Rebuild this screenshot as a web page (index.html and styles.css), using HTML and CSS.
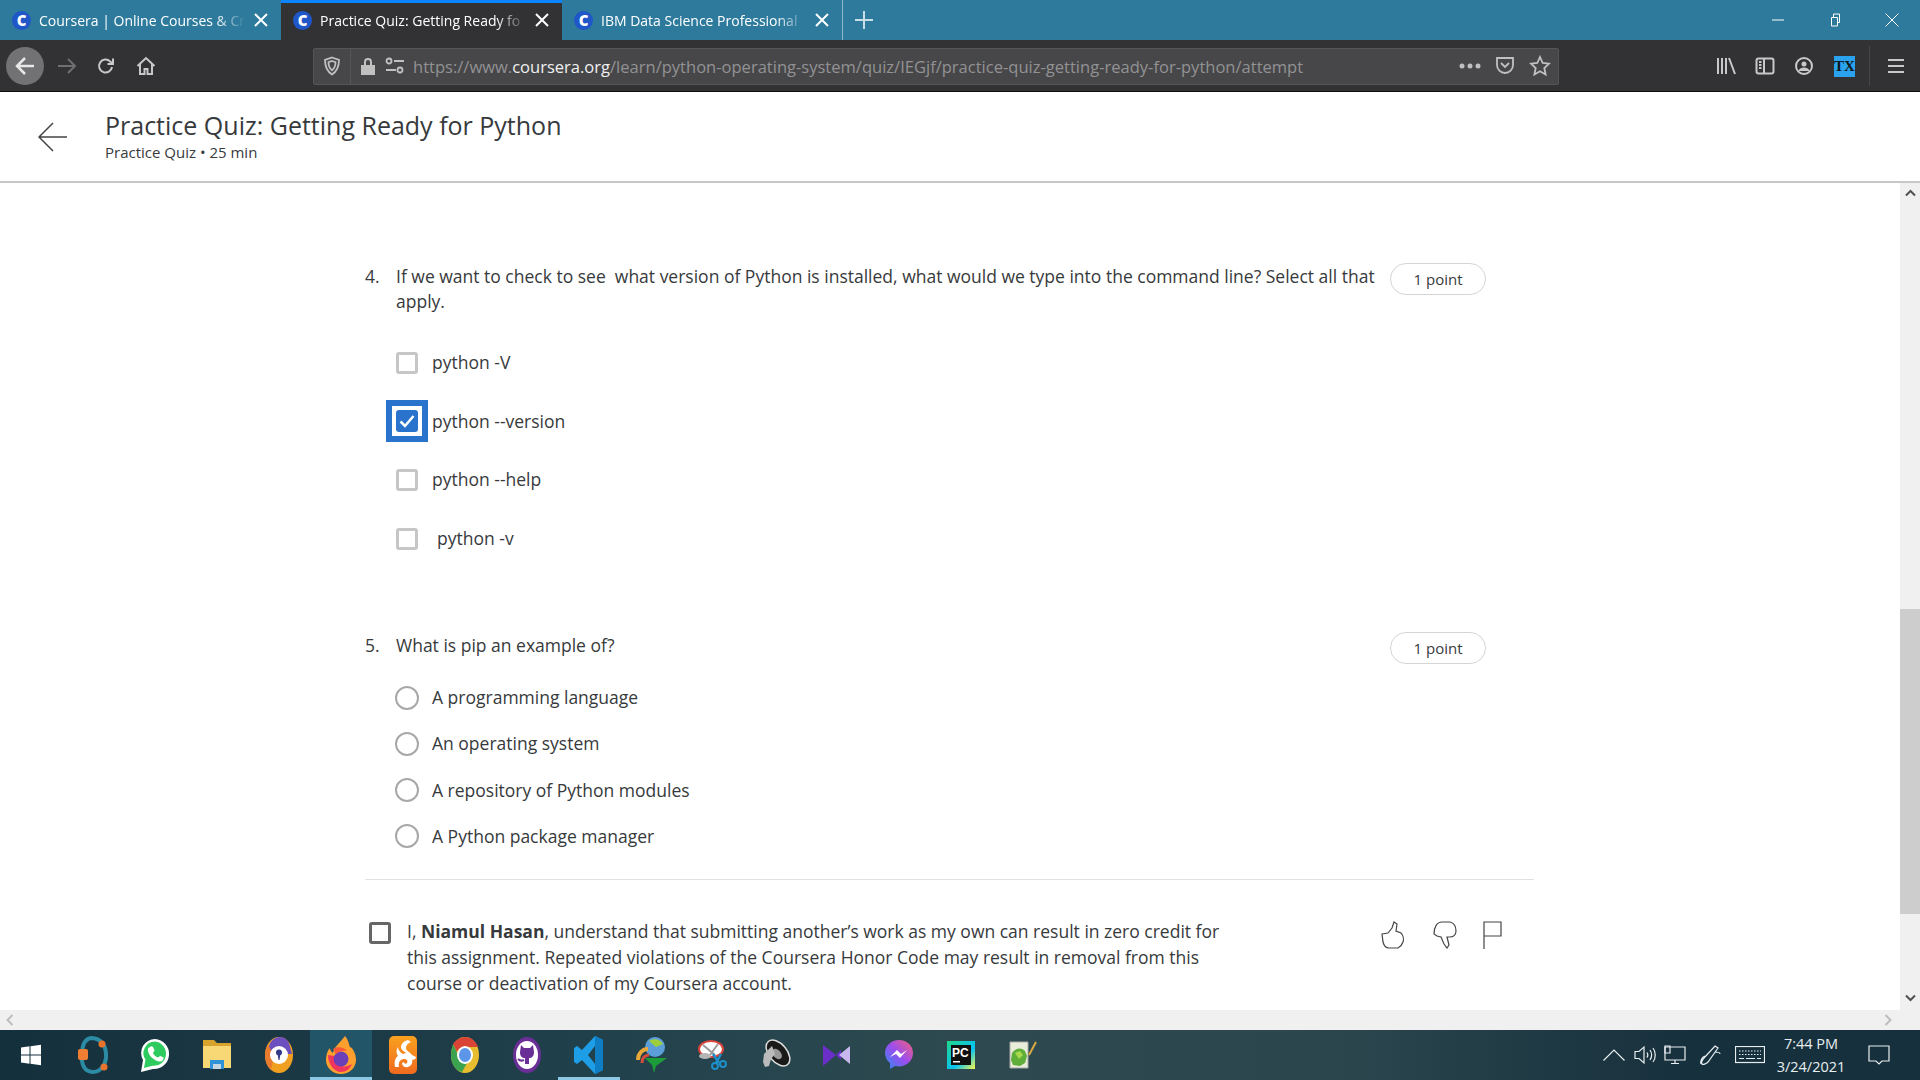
FILE: index.html
```html
<!DOCTYPE html>
<html lang="en">
<head>
    <meta charset="UTF-8">
    <meta name="viewport" content="width=device-width, initial-scale=1.0">
    <title>Practice Quiz: Getting Ready for Python</title>
    <link rel="stylesheet" href="styles.css">
</head>
<body>

    <div class="tab-bar">
        <div class="tab">
            <span class="favicon">C</span>
            <span class="tab-title">Coursera | Online Courses &amp; Cr</span>
            <svg class="tab-close" width="14" height="14" viewBox="0 0 14 14"><path d="M1 1l12 12M13 1L1 13"/></svg>
        </div>
        <div class="tab active">
            <span class="favicon">C</span>
            <span class="tab-title">Practice Quiz: Getting Ready fo</span>
            <svg class="tab-close" width="14" height="14" viewBox="0 0 14 14"><path d="M1 1l12 12M13 1L1 13"/></svg>
        </div>
        <div class="tab last">
            <span class="favicon">C</span>
            <span class="tab-title">IBM Data Science Professional</span>
            <svg class="tab-close" width="14" height="14" viewBox="0 0 14 14"><path d="M1 1l12 12M13 1L1 13"/></svg>
        </div>
        <svg class="new-tab" width="18" height="18" viewBox="0 0 18 18"><path d="M9 0v18M0 9h18"/></svg>
        <div class="window-controls">
            <svg width="14" height="14" viewBox="0 0 14 14"><path d="M1 7h12"/></svg>
            <svg width="14" height="14" viewBox="0 0 14 14"><path d="M3.500 4.500h6v8.500h-6zM5.500 4.500V1h6v8.500h-2"/></svg>
            <svg width="14" height="14" viewBox="0 0 14 14"><path d="M.5.5l13 13M13.500.5l-13 13"/></svg>
        </div>
    </div>

    <div class="toolbar">
        <div class="back-circle">
            <svg width="22" height="22" viewBox="0 0 22 22"><path d="M20 11H3M11 3l-8 8 8 8"/></svg>
        </div>
        <svg class="nav-icon forward" width="20" height="20" viewBox="0 0 20 20"><path d="M1 10h17M11 3l7 7-7 7"/></svg>
        <svg class="nav-icon" width="20" height="20" viewBox="0 0 20 20"><path d="M16 11a6.500 6.500 0 1 1-1.900-5.600L17 8M17 2.500V8h-5.500"/></svg>
        <svg class="nav-icon home" width="20" height="20" viewBox="0 0 20 20"><path d="M1.500 10L10 2l8.500 8M4 8v10h4.500v-5h3v5H16V8"/></svg>

        <div class="url-bar">
            <svg class="url-icon" width="18" height="20" viewBox="0 0 18 20"><path d="M9 1.500l7 2.500c0 6-1.500 11-7 14.500C3.500 15 2 10 2 4z"/><path d="M9 5l3.500 1.200c0 3-.7 5.800-3.500 8-2.800-2.200-3.500-5-3.500-8z"/></svg>
            <span class="url-sep"></span>
            <svg class="url-lock" width="16" height="20" viewBox="0 0 16 20"><path d="M1 9h14v10H1zM4 9V6a4 4 0 0 1 8 0v3h-2V6a2 2 0 0 0-4 0v3z"/></svg>
            <svg class="url-icon url-perm" width="20" height="18" viewBox="0 0 20 18"><circle cx="4" cy="4" r="2.500"/><path d="M9 4h10M1 13h10"/><circle cx="15" cy="13" r="2.500"/></svg>
            <span class="url-text">https://www.<b>coursera.org</b>/learn/python-operating-system/quiz/IEGjf/practice-quiz-getting-ready-for-python/attempt</span>
            <svg class="url-dots" width="22" height="6" viewBox="0 0 22 6"><circle cx="3" cy="3" r="2.500"/><circle cx="11" cy="3" r="2.500"/><circle cx="19" cy="3" r="2.500"/></svg>
            <svg class="url-icon" width="20" height="20" viewBox="0 0 20 20"><path d="M2 2h16v7a8 8 0 0 1-16 0z"/><path d="M6 7l4 4 4-4"/></svg>
            <svg class="url-icon" width="22" height="22" viewBox="0 0 22 22"><path d="M11 2l2.700 6 6.300.7-4.700 4.300 1.300 6.500L11 16.200 5.400 19.500 6.700 13 2 8.700 8.300 8z"/></svg>
        </div>

        <div class="tool-icons">
            <svg class="nav-icon" width="20" height="20" viewBox="0 0 20 20"><path d="M2 2v16M6 2v16M10 2v16M13 2l6 16"/></svg>
            <svg class="nav-icon" width="20" height="20" viewBox="0 0 20 20"><rect x="1.500" y="2.500" width="17" height="15" rx="2"/><path d="M9 2.500v15M4 6h2.500M4 9h2.500M4 12h2.500"/></svg>
            <svg class="nav-icon" width="20" height="20" viewBox="0 0 20 20"><circle cx="10" cy="10" r="8"/><circle class="solid" cx="10" cy="8" r="2.500"/><path class="solid" d="M4.500 15c1-3 3-3.500 5.500-3.500s4.500.5 5.500 3.500z"/></svg>
            <span class="tx-badge">TX</span>
            <span class="tool-sep"></span>
            <svg class="nav-icon menu" width="18" height="16" viewBox="0 0 18 16"><path d="M1 2h16M1 8h16M1 14h16"/></svg>
        </div>
    </div>

    <div class="page-header">
        <svg class="page-back" width="30" height="30" viewBox="0 0 30 30"><path d="M29 15H1M15 1L1 15l14 14"/></svg>
        <div class="page-title">
            <h1>Practice Quiz: Getting Ready for Python</h1>
            <p class="page-sub">Practice Quiz • 25 min</p>
        </div>
    </div>

    <div class="viewport">
        <div class="page-col">
            <div class="scroll-area">
                <div class="quiz">

                    <div class="question">
                        <span class="q-num">4.</span>
                        <p class="q-text">If we want to check to see&nbsp; what version of Python is installed, what would we type into the command line? Select all that apply.</p>
                        <span class="points">1 point</span>
                    </div>
                    <div class="check-list">
                        <div class="option"><span class="box"></span><span>python -V</span></div>
                        <div class="option">
                            <span class="box checked">
                                <svg width="16" height="14" viewBox="0 0 16 14"><path d="M1.500 7.500l4.500 4.500 8.500-10"/></svg>
                            </span>
                            <span>python --version</span>
                        </div>
                        <div class="option"><span class="box"></span><span>python --help</span></div>
                        <div class="option"><span class="box"></span><span class="shifted">python -v</span></div>
                    </div>

                    <div class="question q5">
                        <span class="q-num">5.</span>
                        <p class="q-text">What is pip an example of?</p>
                        <span class="points">1 point</span>
                    </div>
                    <div class="radio-list">
                        <div class="option"><span class="radio"></span><span>A programming language</span></div>
                        <div class="option"><span class="radio"></span><span>An operating system</span></div>
                        <div class="option"><span class="radio"></span><span>A repository of Python modules</span></div>
                        <div class="option"><span class="radio"></span><span>A Python package manager</span></div>
                    </div>

                    <div class="honor">
                        <span class="box dark"></span>
                        <p class="honor-text">I, <b>Niamul Hasan</b>, understand that submitting another’s work as my own can result in zero credit for this assignment. Repeated violations of the Coursera Honor Code may result in removal from this course or deactivation of my Coursera account.</p>
                        <div class="feedback">
                            <svg width="24" height="28" viewBox="0 0 24 28"><path d="M1 13l6-1 4-5 2-6 3 2-1 7 5 2c2 2 3 6 2 9-1 3-3 5-5 6H8c-3 0-5-2-6-6z"/></svg>
                            <svg width="24" height="28" viewBox="0 0 24 28"><path d="M1 13C1 6 4 1 9 1h8c4 1 6 5 6 9 0 4-3 6-6 6h-3l2 8-2 3-3-4-3-7-4-1z"/></svg>
                            <svg width="19" height="28" viewBox="0 0 19 28"><path d="M1 28V1h17v14H1"/></svg>
                        </div>
                    </div>

                </div>
            </div>
            <div class="h-scroll">
                <svg width="8" height="12" viewBox="0 0 8 12"><path d="M6.500 1L1.500 6l5 5"/></svg>
                <svg width="8" height="12" viewBox="0 0 8 12"><path d="M1.500 1l5 5-5 5"/></svg>
            </div>
        </div>

        <div class="v-scroll">
            <svg width="11" height="8" viewBox="0 0 11 8"><path d="M1 6.500l4.500-4.500 4.500 4.500"/></svg>
            <div class="v-track"><div class="v-thumb"></div></div>
            <svg width="11" height="8" viewBox="0 0 11 8"><path d="M1 1.500l4.500 4.500 4.500-4.500"/></svg>
        </div>
    </div>

    <div class="taskbar">
        <div class="task-item">
            <svg width="22" height="22" viewBox="0 0 22 22"><path fill="#fff" d="M1 3.500l8.500-1.200v8.200H1zM10.500 2.200L21 .8v9.700H10.500zM1 11.500h8.500v8.200L1 18.500zM10.500 11.500H21v9.700l-10.500-1.400z"/></svg>
        </div>
        <div class="task-item">
            <svg width="32" height="40" viewBox="0 0 32 40"><path fill="none" stroke="#2b8ca3" stroke-width="4" d="M14 3c10 0 16 8 15 20-1 8-6 14-13 14C8 37 4 30 5 20 5 10 8 4 14 3z"/><rect x="1" y="14" width="10" height="11" rx="2" fill="#ef7d32"/><circle cx="25" cy="9" r="3.500" fill="#e8732a"/><circle cx="27" cy="32" r="3.500" fill="#e8732a"/></svg>
        </div>
        <div class="task-item">
            <svg width="30" height="36" viewBox="0 0 30 36"><path fill="#fff" d="M15 2a14 14 0 0 0-12 21L1 35l12-3A14 14 0 1 0 15 2z"/><path fill="#2ecc5f" d="M15 4.500A11.500 11.500 0 0 0 5.500 22.500L4 31l8.500-2.200A11.500 11.500 0 1 0 15 4.500z"/><path fill="#fff" d="M10 10c1-1 2-1 3 0l1.500 3c0 1-1 2-1.500 3 1 2 2.500 3.500 5 4.500 1-.5 1.500-1.500 2.500-1.500l3 1.500c.5 2-1 4-3.500 4C14 24.500 7 17 8 12c0-1 1-1.500 2-2z"/></svg>
        </div>
        <div class="task-item">
            <svg width="30" height="34" viewBox="0 0 30 34"><path fill="#d7a32c" d="M1 2h11l3 3h14v7H1z"/><path fill="#f8d775" d="M1 8h28v22H1z"/><path fill="#2f93d8" d="M8 22h14v9h-3v-5h-8v5H8z"/><path fill="#c4d6e0" d="M11 26h8v5h-8z"/></svg>
        </div>
        <div class="task-item">
            <svg width="30" height="38" viewBox="0 0 30 38"><ellipse cx="15" cy="19" rx="14" ry="18" fill="#f0a020"/><path fill="#6e4fbf" d="M6 7c5-8 15-8 19 0l3 11H3z"/><path fill="#e87b2d" d="M1 19c0-4 1-7 3-10l6 10-3 15C3 31 1 25 1 19z"/><circle cx="15" cy="19" r="9" fill="#fff"/><circle cx="15" cy="16.500" r="3" fill="#333a8c"/><path fill="#333a8c" d="M13.500 17h3l-1 7h-1z"/></svg>
        </div>
        <div class="task-item running open">
            <svg width="32" height="40" viewBox="0 0 32 40"><path fill="#ff9f2e" d="M20 1c4 5 4 9 5 11 3 1 6 7 6 13 0 8-7 14-15 14S1 33 1 25c0-4 1-9 4-12 0 3 2 4 3 5 1-6 6-9 12-17z"/><path fill="#f0365c" d="M3 20c0 9 6 17 13 17 5 0 9-3 11-8-8 5-18 2-18-8z"/><circle cx="16" cy="24" r="7.500" fill="#6a3fb8"/><path fill="#ff5a36" d="M8 14c5-3 11-2 14 2-4-1-9 0-11 3z"/></svg>
        </div>
        <div class="task-item">
            <svg width="28" height="38" viewBox="0 0 28 38"><defs><linearGradient id="uc" x1="0" y1="0" x2="0" y2="1"><stop offset="0" stop-color="#f9a11f"/><stop offset="1" stop-color="#ef6a1e"/></linearGradient></defs><rect width="28" height="38" rx="5" fill="url(#uc)"/><path fill="#fff" d="M19 4c-4 1-7 4-7 7 0 3 3 4 5 6l-3 1c-2-1-5-4-5-7-2 3-2 6 0 9-3 2-4 6-3 11h4c-1-4 1-8 5-8 3 0 4 2 3 4-1 1-3 1-3-1l-2 1c0 3 3 5 6 4 3-1 5-4 4-7 2 0 4-1 4-3l-4-2c-2-3-6-4-6-7 0-3 2-5 5-6z"/></svg>
        </div>
        <div class="task-item">
            <svg width="30" height="38" viewBox="0 0 30 38"><ellipse cx="15" cy="19" rx="14" ry="18" fill="#e7bd2f"/><path fill="#d94436" d="M15 1c6 0 11 4 13 10H15c-4 0-7 2-8 5L3 8c3-4 7-7 12-7z"/><path fill="#3ba24f" d="M3 8l7 15c2 3 4 4 7 4l-5 9C6 35 1 28 1 19 1 15 2 11 3 8z"/><ellipse cx="15" cy="19" rx="8" ry="9" fill="#fff"/><ellipse cx="15" cy="19" rx="6" ry="7" fill="#5d95e8"/></svg>
        </div>
        <div class="task-item">
            <svg width="30" height="38" viewBox="0 0 30 38"><ellipse cx="15" cy="19" rx="14" ry="18" fill="#6a2f96"/><ellipse cx="15" cy="19" rx="11" ry="14" fill="#fff"/><path fill="#6a2f96" d="M9 9l3 3h6l3-3 1 7c0 4-2 6-5 6v6h-4v-6c-3 0-5-2-5-6z"/><path fill="none" stroke="#6a2f96" stroke-width="2" d="M6 23c2 2 4 2 6 1"/></svg>
        </div>
        <div class="task-item running">
            <svg width="30" height="40" viewBox="0 0 30 40"><path fill="#1f9ee8" d="M21 1l8 4v30l-8 4-13-14-5 4-3-2v-14l3-2 5 4zM21 11l-7 9 7 9z"/><path fill="#0e7dc4" d="M21 1l8 4v30l-8 4z"/></svg>
        </div>
        <div class="task-item">
            <svg width="32" height="38" viewBox="0 0 32 38"><circle cx="20" cy="11" r="10" fill="#5c9fd8"/><path fill="#9fce3d" d="M14 5c5-3 11-2 14 3l-7 3z"/><path fill="none" stroke="#e9a83a" stroke-width="4" d="M3 24c0-7 5-11 10-11"/><path fill="none" stroke="#d84c3c" stroke-width="3" d="M7 27c0-5 3-8 7-8"/><path fill="#1d9d3a" d="M10 22l22 0-11 8-2 7-2-8z"/></svg>
        </div>
        <div class="task-item">
            <svg width="30" height="30" viewBox="0 0 30 30"><ellipse cx="13" cy="9" rx="12" ry="8" fill="#fff" stroke="#d9433c" stroke-width="2"/><path stroke="#999" stroke-width="2" fill="none" d="M5 5l12 10M20 4L12 15"/><ellipse cx="7" cy="16" rx="6" ry="3" fill="#b5b5b5"/><path fill="none" stroke="#1e8fc9" stroke-width="2.500" d="M15 14l6 9M23 14l-5 9"/><circle cx="17" cy="26" r="3" fill="none" stroke="#1e8fc9" stroke-width="2"/><circle cx="25" cy="24" r="3" fill="none" stroke="#1e8fc9" stroke-width="2"/></svg>
        </div>
        <div class="task-item">
            <svg width="32" height="34" viewBox="0 0 32 34"><ellipse cx="19" cy="15" rx="9" ry="15" transform="rotate(-40 19 15)" fill="#1a1a1a" stroke="#ddd" stroke-width="1.500"/><ellipse cx="18" cy="16" rx="4" ry="6" transform="rotate(-40 18 16)" fill="#999"/><path fill="#bbb" d="M5 16l8-8 3 8-4 5-2 7-4 1-2-5z"/></svg>
        </div>
        <div class="task-item">
            <svg width="28" height="24" viewBox="0 0 28 24"><path fill="#6a2fc8" d="M0 2l13 10L0 23z"/><path fill="#6a2fc8" d="M13 12l5-5v10z"/><path fill="#c9b8ee" d="M16 12L27 3v18z"/></svg>
        </div>
        <div class="task-item">
            <svg width="30" height="32" viewBox="0 0 30 32"><defs><linearGradient id="mess" x1="0" y1="1" x2="1" y2="0"><stop offset="0" stop-color="#2d8cf0"/><stop offset=".5" stop-color="#9a4df0"/><stop offset="1" stop-color="#f4607a"/></linearGradient></defs><path fill="url(#mess)" d="M15 1C7 1 1 7 1 14c0 4 2 8 5 10v6l5-3c1 .3 3 .4 4 .4 8 0 14-6 14-13.400S23 1 15 1z"/><path fill="#fff" d="M6 18l7-7 4 4 6-4-7 8-4-4z"/></svg>
        </div>
        <div class="task-item">
            <svg width="28" height="28" viewBox="0 0 28 28"><defs><linearGradient id="pycharm" x1="0" y1="0" x2="1" y2="1"><stop offset="0" stop-color="#21d789"/><stop offset=".6" stop-color="#07c3f2"/><stop offset="1" stop-color="#fcf84a"/></linearGradient></defs><rect width="28" height="28" fill="url(#pycharm)"/><rect x="4" y="4" width="20" height="20" fill="#111"/><text x="5" y="16" class="pc-text">PC</text><rect x="6" y="20" width="7" height="1.500" fill="#fff"/></svg>
        </div>
        <div class="task-item">
            <svg width="28" height="28" viewBox="0 0 28 28"><path fill="#e8ecd8" stroke="#aaa" d="M1 1h18v26H1z"/><path fill="#5fae3a" d="M3 12c3-5 9-6 13-2l2 5-2 7-5 3-7-1-2-5z"/><path fill="#a8d84c" d="M6 12l5-2 3 4-4 4z"/><path stroke="#d9a93f" stroke-width="2" d="M20 14l7-13"/></svg>
        </div>

        <div class="tray">
            <svg width="24" height="14" viewBox="0 0 24 14"><path d="M1.500 12.500L12 2l10.500 10.500"/></svg>
            <svg width="22" height="20" viewBox="0 0 22 20"><path d="M1 6.500h4L10 2v16l-5-4.500H1zM13 7.500c1 1.500 1 3.500 0 5M16 5c2 3 2 7 0 10M19 3c3 4 3 10 0 14"/></svg>
            <svg width="22" height="20" viewBox="0 0 22 20"><path d="M1 2h20v13H1zM11 15v3M7 18.500h8"/><path d="M1 1h5v7H1z"/></svg>
            <svg class="tray-pen" width="22" height="22" viewBox="0 0 22 22"><path d="M16 2l3 2-10 14c-2 2-5 3-6 2s0-4 2-6zM2 20c-1-3 1-7 4-8M16 8c3 0 5 1 5 2"/></svg>
            <svg class="tray-keys" width="30" height="18" viewBox="0 0 30 18"><rect x=".5" y=".5" width="29" height="16"/><path class="dotted" d="M4 5h22M4 8.500h22"/><path d="M4 12.500h5M11 12.500h9M22 12.500h4"/></svg>
            <div class="clock">
                <span>7:44 PM</span>
                <span>3/24/2021</span>
            </div>
            <svg class="notif" width="22" height="21" viewBox="0 0 22 21"><path d="M1 1h20v15h-7l-3 3-3-3H1z"/></svg>
        </div>
    </div>

</body>
</html>
```

FILE: styles.css
```css
html, body {
    margin: 0;
    height: 100%;
    overflow: hidden;
}

body {
    width: 1920px;
    height: 1080px;
    display: flex;
    flex-direction: column;
    font-family: "Open Sans", Arial, sans-serif;
    color: #373a3c;
    background-color: white;
}

/* browser tabs */
.tab-bar {
    height: 40px;
    background-color: #2d7a9c;
    display: flex;
    align-items: center;
    color: white;
    flex-shrink: 0;
}

.tab {
    width: 281px;
    height: 40px;
    box-sizing: border-box;
    padding: 0 13px 0 12px;
    display: flex;
    align-items: center;
    gap: 8px;
}

.tab.active {
    background-color: #323234;
    border-top: 3px solid #0a84ff;
    padding-bottom: 3px;
}

.tab.last {
    border-right: 1px solid #8fb8ca;
}

.favicon {
    width: 19px;
    height: 19px;
    flex-shrink: 0;
    border-radius: 50%;
    background-color: #1f56c8;
    color: white;
    font-weight: 800;
    font-size: 15px;
    line-height: 19px;
    text-align: center;
}

.tab-title {
    flex: 1;
    font-size: 14px;
    white-space: nowrap;
    -webkit-mask-image: linear-gradient(to right, black 85%, transparent 100%);
    mask-image: linear-gradient(to right, black 85%, transparent 100%);
}

.tab-close path, .new-tab path, .window-controls path {
    fill: none;
    stroke: white;
}

.tab-close path {
    stroke-width: 2;
}

.new-tab {
    margin-left: 12px;
}

.new-tab path {
    stroke-width: 2;
    stroke: #c9dde6;
}

.window-controls {
    margin-left: auto;
    margin-right: 21px;
    display: flex;
    gap: 43px;
}

/* browser toolbar */
.toolbar {
    height: 52px;
    box-sizing: border-box;
    background-color: #323234;
    border-bottom: 1px solid #0c0c0d;
    display: flex;
    align-items: center;
    padding: 1px 0 0 6px;
    flex-shrink: 0;
}

.back-circle {
    width: 38px;
    height: 38px;
    border-radius: 50%;
    background-color: #727274;
    display: flex;
    align-items: center;
    justify-content: center;
}

.back-circle path {
    fill: none;
    stroke: #e8e8e8;
    stroke-width: 2.500;
}

.nav-icon {
    margin-left: 19px;
}

.toolbar .forward {
    margin-left: 13px;
}

.toolbar .home {
    margin-left: 20px;
}

.nav-icon path, .nav-icon rect, .nav-icon circle {
    fill: none;
    stroke: #c8c8c9;
    stroke-width: 2;
}

.forward path {
    stroke: #6f6f71;
}

.nav-icon .solid {
    fill: #c8c8c9;
    stroke: none;
}

.url-bar {
    width: 1246px;
    height: 37px;
    box-sizing: border-box;
    margin-left: 157px;
    background-color: #474749;
    border: 1px solid #555557;
    border-radius: 2px;
    display: flex;
    align-items: center;
    padding: 0 7px 0 9px;
    color: #929294;
}

.url-icon path, .url-icon circle {
    fill: none;
    stroke: #c0c0c1;
    stroke-width: 1.800;
}

.url-sep {
    width: 1px;
    height: 36px;
    margin: 0 9px;
    background-color: #555557;
}

.url-lock {
    fill: #c0c0c1;
    margin-right: 9px;
}

.url-text {
    flex: 1;
    margin-left: 8px;
    font-size: 16.550px;
    white-space: nowrap;
}

.url-text b {
    font-weight: 400;
    color: #f0f0f0;
}

.url-dots {
    fill: #c0c0c1;
    margin-right: 14px;
}

.url-bar .url-icon:last-child {
    margin-left: 14px;
}

.tool-icons {
    display: flex;
    align-items: center;
    margin-left: 133px;
    flex: 1;
}

.tool-icons .nav-icon:first-child {
    margin-left: 24px;
}

.tx-badge {
    width: 21px;
    height: 21px;
    margin-left: 20px;
    background-color: #2aa2ee;
    color: #101820;
    font-family: "Liberation Serif", serif;
    font-size: 15px;
    font-weight: 700;
    line-height: 21px;
    text-align: center;
}

.tool-sep {
    width: 1px;
    height: 40px;
    margin-left: 14px;
    background-color: #474749;
}

.toolbar .menu {
    margin-left: 17px;
}

/* course page header */
.page-header {
    height: 91px;
    box-sizing: border-box;
    border-bottom: 2px solid #c8c8c8;
    display: flex;
    align-items: center;
    flex-shrink: 0;
}

.page-back {
    margin: 1px 0 0 38px;
    flex-shrink: 0;
}

.page-back path {
    fill: none;
    stroke: #444;
    stroke-width: 1.500;
}

.page-title {
    margin: 0 0 3px 37px;
}

h1 {
    margin: 0;
    font-size: 25px;
    font-weight: 400;
    line-height: 34px;
    color: #373a3c;
}

.page-sub {
    margin: 0;
    font-size: 15px;
    line-height: 20px;
}

/* quiz */
.viewport {
    flex: 1;
    min-height: 0;
    display: flex;
}

.page-col {
    flex: 1;
    min-width: 0;
    display: flex;
    flex-direction: column;
}

.scroll-area {
    flex: 1;
    min-height: 0;
    overflow: hidden;
}

.quiz {
    width: 1169px;
    margin-left: 365px;
    padding-top: 81px;
    font-size: 17.500px;
    line-height: 25px;
}

.question {
    display: flex;
    align-items: flex-start;
    padding-right: 48px;
}

.q-num {
    width: 31px;
    flex-shrink: 0;
}

.q-text {
    margin: 0;
    flex: 1;
}

.points {
    width: 94px;
    height: 30px;
    margin: -1px 0 0 10px;
    flex-shrink: 0;
    border: 1px solid #d5d5d5;
    border-radius: 16px;
    font-size: 15px;
    line-height: 31px;
    text-align: center;
}

.check-list, .radio-list {
    padding-left: 31px;
    display: flex;
    flex-direction: column;
}

.check-list {
    margin-top: 36px;
    gap: 33.700px;
}

.radio-list {
    margin-top: 21px;
    gap: 21.300px;
}

.q5 {
    margin-top: 82px;
}

.option {
    display: flex;
    align-items: center;
    height: 25px;
    gap: 14px;
}

.box {
    width: 22px;
    height: 22px;
    box-sizing: border-box;
    flex-shrink: 0;
    border: 3px solid #c6c6c6;
    border-radius: 3px;
    position: relative;
}

.box.checked {
    background-color: #2a73cc;
    border-color: #2a73cc;
    display: flex;
    align-items: center;
    justify-content: center;
}

.box.checked::after {
    content: "";
    position: absolute;
    top: -13px;
    left: -13px;
    width: 42px;
    height: 42px;
    box-sizing: border-box;
    border: 6px solid #2a73cc;
}

.box.checked svg {
    flex-shrink: 0;
}

.box.checked path {
    fill: none;
    stroke: white;
    stroke-width: 2.500;
}

.box.dark {
    border: 3px solid #666;
    margin-top: 4px;
}

.shifted {
    margin-left: 5px;
}

.radio {
    width: 24px;
    height: 24px;
    box-sizing: border-box;
    margin-left: -1px;
    margin-right: -1px;
    flex-shrink: 0;
    border: 2px solid #a8a8a8;
    border-radius: 50%;
}

.honor {
    margin-top: 30px;
    padding: 38px 0 0 4px;
    border-top: 1px solid #e1e1e1;
    display: flex;
    align-items: flex-start;
}

.honor-text {
    width: 830px;
    margin: 0 0 0 16px;
    line-height: 26px;
}

.honor-text b {
    font-weight: 700;
}

.feedback {
    margin: 3px 0 0 144px;
    display: flex;
    gap: 28px;
}

.feedback svg {
    fill: none;
    stroke: #444;
    stroke-width: 1.200;
}

.feedback svg:last-child {
    margin-left: -2px;
}

/* scrollbars */
.v-scroll {
    width: 20px;
    background-color: #f0f0f0;
    display: flex;
    flex-direction: column;
    align-items: center;
    padding: 6px 0 28px;
    box-sizing: border-box;
}

.v-scroll path {
    fill: none;
    stroke: #505050;
    stroke-width: 2;
}

.v-track {
    flex: 1;
    width: 100%;
    margin: 6px 0;
    padding-top: 406px;
    box-sizing: border-box;
}

.v-thumb {
    height: 305px;
    background-color: #cdcdcd;
}

.h-scroll {
    height: 20px;
    background-color: #f0f0f0;
    display: flex;
    align-items: center;
    justify-content: space-between;
    padding: 0 8px 0 6px;
    flex-shrink: 0;
}

.h-scroll path {
    fill: none;
    stroke: #bdbdbd;
    stroke-width: 2;
}

/* windows taskbar */
.taskbar {
    height: 50px;
    background: linear-gradient(to right, #15303d 0%, #20404b 30%, #2e4a50 50%, #2b464d 70%, #17303d 88%, #17303d 100%);
    display: flex;
    align-items: center;
    flex-shrink: 0;
}

.task-item {
    width: 62px;
    height: 50px;
    box-sizing: border-box;
    display: flex;
    align-items: center;
    justify-content: center;
    flex-shrink: 0;
}

.task-item.running {
    border-bottom: 3px solid #8cc8e4;
    padding-top: 3px;
}

.task-item.open {
    background-color: #235569;
}

.pc-text {
    fill: white;
    font-family: "Liberation Sans", Arial, sans-serif;
    font-size: 12px;
    font-weight: 700;
}

.tray {
    margin-left: auto;
    height: 50px;
    display: flex;
    align-items: center;
    gap: 8px;
    padding-right: 30px;
    color: #e8eef0;
}

.tray svg {
    fill: none;
    stroke: #e8eef0;
    stroke-width: 1.200;
    flex-shrink: 0;
}

.tray .tray-pen {
    margin-left: 5px;
}

.tray .tray-keys {
    margin-left: 6px;
}

.tray .dotted {
    stroke-dasharray: 1.500 1.500;
}

.clock {
    width: 74px;
    margin-left: 1px;
    display: flex;
    flex-direction: column;
    align-items: center;
    gap: 2px;
    font-size: 14.500px;
    line-height: 21px;
}

.tray .notif {
    margin-left: 12px;
}
```
